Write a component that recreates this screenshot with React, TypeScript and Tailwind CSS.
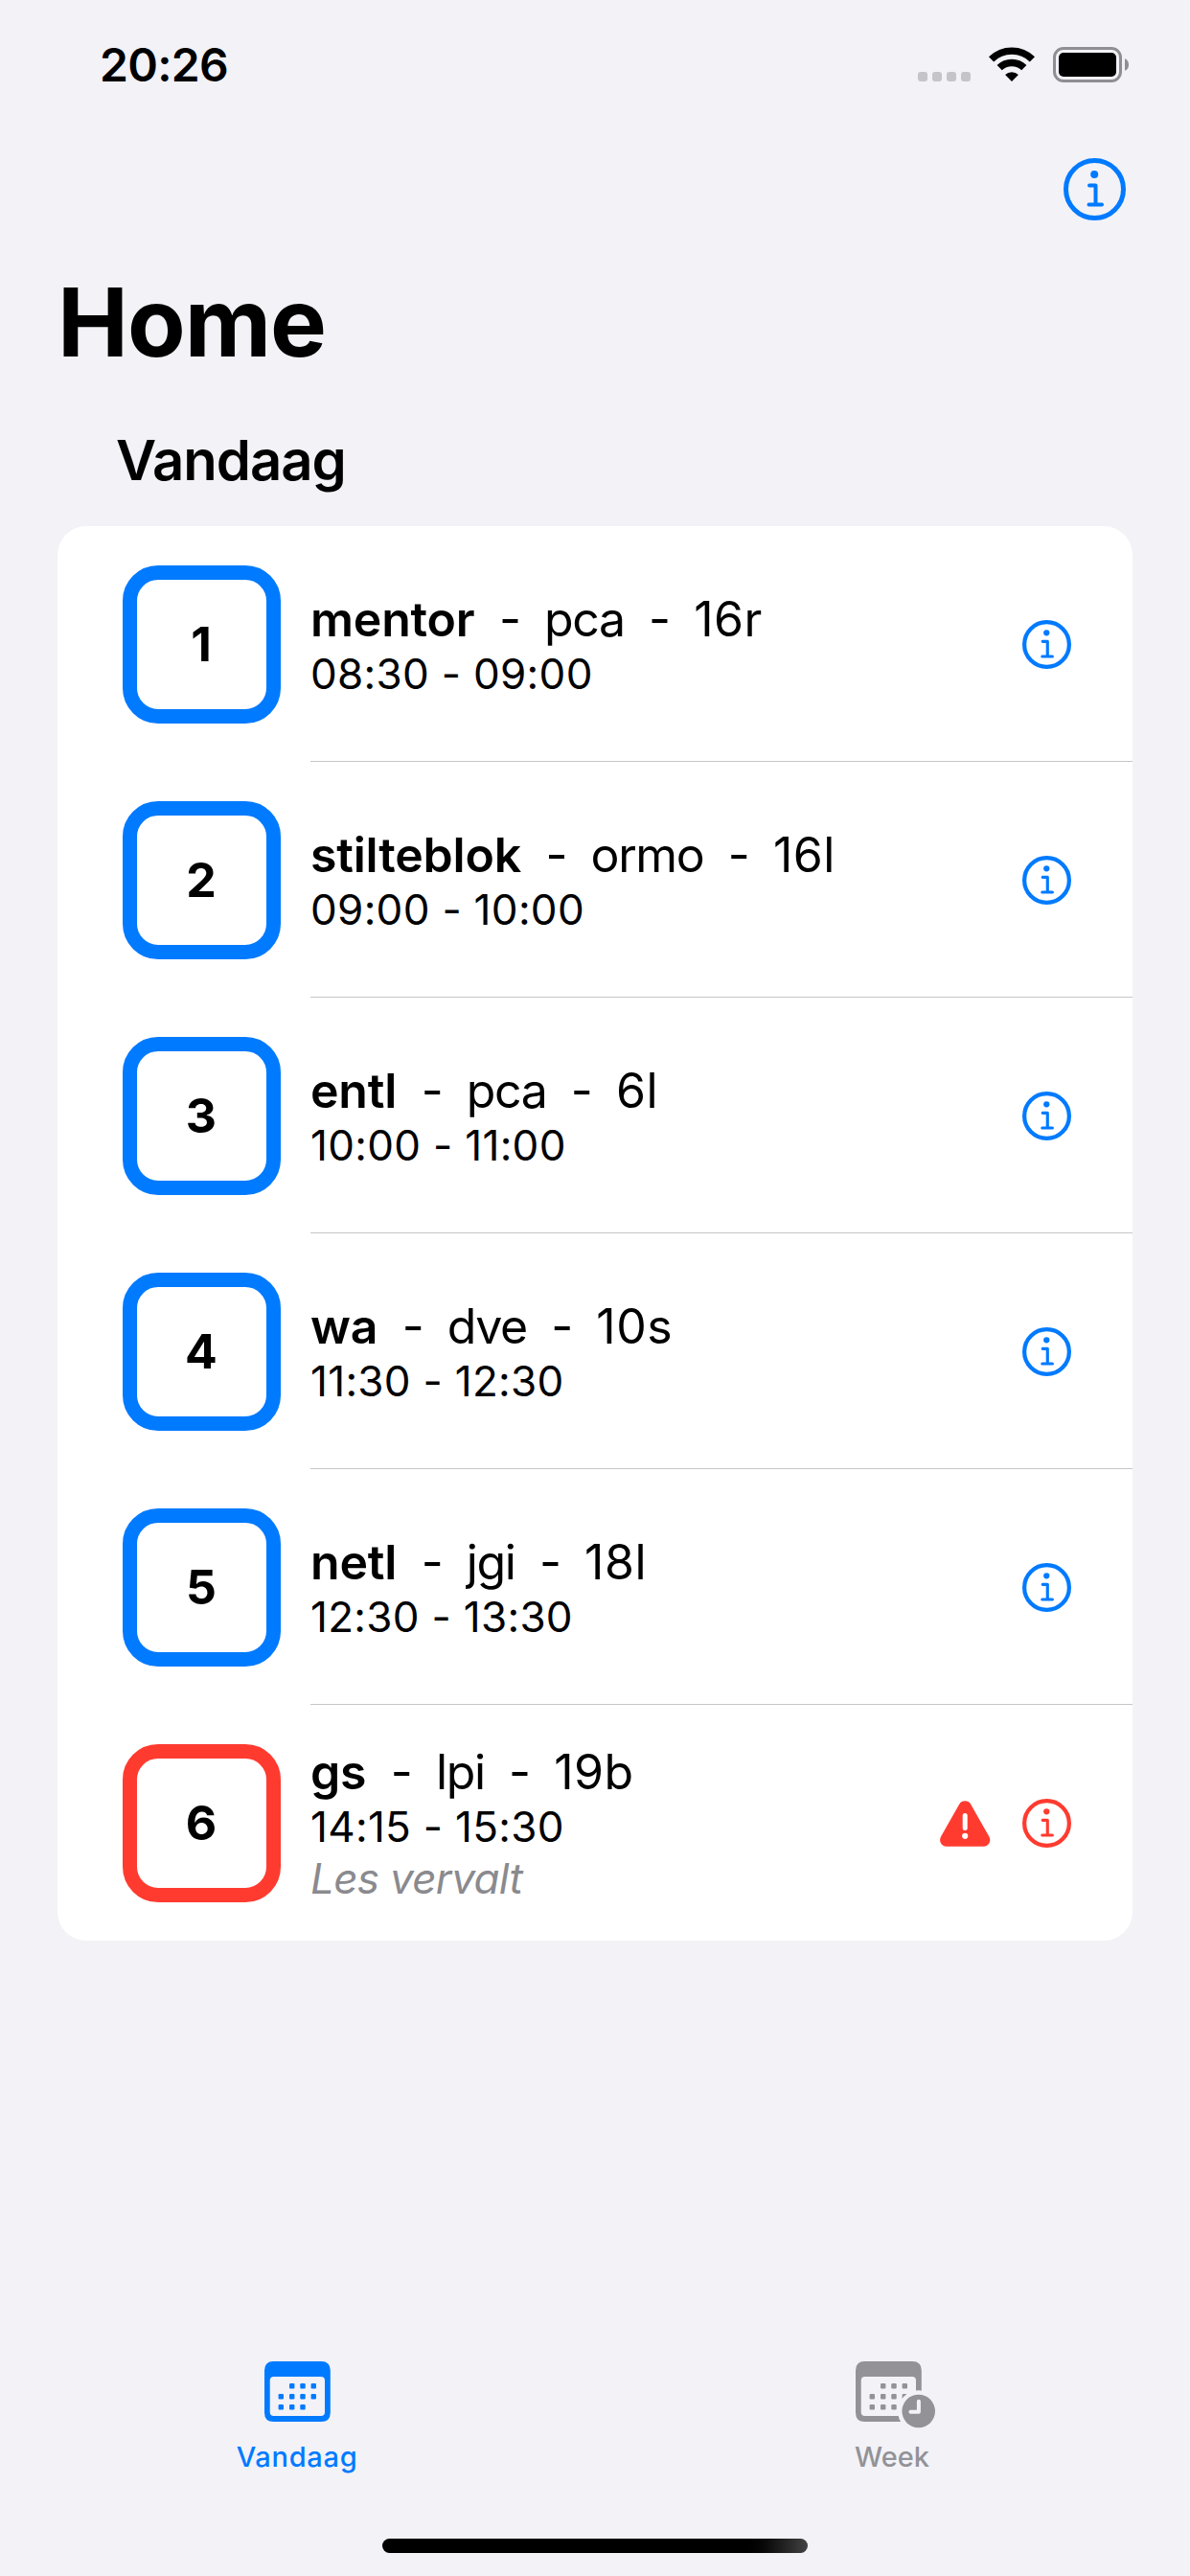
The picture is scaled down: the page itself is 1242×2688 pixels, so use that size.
type Lesson = {
  hour: number;
  subject: string;
  teacher: string;
  room: string;
  time: string;
  note?: string;
};

const lessons: Lesson[] = [
  { hour: 1, subject: "mentor", teacher: "pca", room: "16r", time: "08:30 - 09:00" },
  { hour: 2, subject: "stilteblok", teacher: "ormo", room: "16l", time: "09:00 - 10:00" },
  { hour: 3, subject: "entl", teacher: "pca", room: "6l", time: "10:00 - 11:00" },
  { hour: 4, subject: "wa", teacher: "dve", room: "10s", time: "11:30 - 12:30" },
  { hour: 5, subject: "netl", teacher: "jgi", room: "18l", time: "12:30 - 13:30" },
  { hour: 6, subject: "gs", teacher: "lpi", room: "19b", time: "14:15 - 15:30", note: "Les vervalt" },
];

function InfoIcon({ className, ring = 5 }: { className: string; ring?: number }) {
  return (
    <svg viewBox="0 0 65 65" className={className} fill="none" stroke="currentColor">
      <circle cx="32.5" cy="32.5" r={32.5 - ring / 2} strokeWidth={ring} />
      <circle cx="32.2" cy="17" r="4" fill="currentColor" stroke="none" />
      <path d="M27 28.5H33.5V48.5M26.5 48.5H40" strokeWidth="4" strokeLinecap="round" strokeLinejoin="round" />
    </svg>
  );
}

function WarningIcon() {
  return (
    <svg viewBox="0 0 53 48" className="h-12 w-[53px]">
      <path
        d="M20.3 3.6Q22.3 0.3 26.2 0.3T32.1 3.6L51.4 37.4Q53.2 41 51.4 44.3Q49.6 47.7 45.6 47.7H6.8Q2.8 47.7 1 44.3T1 37.4Z"
        fill="currentColor"
      />
      <path d="M26.2 15.6V28.4" stroke="white" strokeWidth="5" strokeLinecap="round" />
      <circle cx="26.2" cy="36.8" r="3.1" fill="white" />
    </svg>
  );
}

function WifiIcon() {
  return (
    <svg viewBox="0 0 48 36" className="h-9 w-12">
      <g fill="none" stroke="black" strokeWidth="7.4">
        <path d="M2.6 12.9A30.5 30.5 0 0 1 45.4 12.9" />
        <path d="M11.2 21.7A18.3 18.3 0 0 1 36.8 21.7" />
      </g>
      <path d="M17.1 29A9.8 9.8 0 0 1 30.9 29L24 36Z" fill="black" />
    </svg>
  );
}

function BatteryIcon() {
  return (
    <svg viewBox="0 0 80 37" className="h-[37px] w-20">
      <rect x="1.5" y="1.5" width="69" height="34" rx="9.5" fill="none" stroke="#8f8f93" strokeWidth="3" />
      <rect x="6" y="6" width="60" height="25" rx="5" fill="black" />
      <path d="M75 12Q79 14 79 18.5T75 25Z" fill="#8f8f93" />
    </svg>
  );
}

const dots = [
  [28.7, 25.7], [40, 25.7], [51.3, 25.7],
  [17.3, 36.7], [28.7, 36.7], [40, 36.7], [51.3, 36.7],
  [17.3, 47.7], [28.7, 47.7], [40, 47.7],
];

function CalendarIcon({ clock = false }: { clock?: boolean }) {
  return (
    <svg viewBox={clock ? "0 0 84 70" : "0 0 69 70"} className={clock ? "ml-[7px] h-[70px] w-[84px]" : "h-[70px] w-[69px]"}>
      <path
        fillRule="evenodd"
        fill="currentColor"
        d="M9.5 0H59.2Q68.8 0 68.8 9.5V53.5Q68.8 63 59.2 63H9.5Q0 63 0 53.5V9.5Q0 0 9.5 0ZM9.7 16Q5.7 16 5.7 20V53Q5.7 57 9.7 57H59Q63 57 63 53V20Q63 16 59 16Z"
      />
      {dots.map(([x, y]) => (
        <rect key={`${x}-${y}`} x={x - 2.7} y={y - 2.7} width="5.4" height="5.4" rx="1.2" fill="currentColor" />
      ))}
      {clock && (
        <>
          <circle cx="65.7" cy="52" r="21.7" fill="#f2f2f7" />
          <circle cx="65.7" cy="52" r="17.3" fill="currentColor" />
          <path d="M65.9 41.8V52.7H57.4" fill="none" stroke="#f2f2f7" strokeWidth="4" strokeLinecap="round" strokeLinejoin="round" />
        </>
      )}
    </svg>
  );
}

function LessonRow({ lesson, last }: { lesson: Lesson; last: boolean }) {
  const cancelled = Boolean(lesson.note);
  return (
    <li className="flex h-[246px] pl-[67.5px]">
      <div
        className={`mt-[40.5px] mr-[31.5px] flex size-[165px] shrink-0 items-center justify-center rounded-[37px] border-[15px] pt-px text-[50px] font-bold ${
          cancelled ? "border-[#ff3b30]" : "border-[#007aff]"
        }`}
      >
        {lesson.hour}
      </div>
      <div className={`flex grow items-center border-b pr-16 ${last ? "border-transparent" : "border-[#c6c6c8]"}`}>
        <div className="grow pt-[3px] whitespace-nowrap">
          <div className="flex gap-[25.5px] text-[50px] leading-[60px] tracking-[-1.4px]">
            <span className="font-semibold tracking-[-0.2px]">{lesson.subject}</span>
            <span>-</span>
            <span>{lesson.teacher}</span>
            <span>-</span>
            <span className="tracking-[0.5px]">{lesson.room}</span>
          </div>
          <div className="text-[44px] leading-[54px] tracking-[0.3px]">{lesson.time}</div>
          {lesson.note && (
            <div className="text-[44px] leading-[54px] tracking-[-0.7px] text-[#8a8a8e] italic">{lesson.note}</div>
          )}
        </div>
        <div className={`mt-[2px] flex items-center gap-[33px] ${cancelled ? "text-[#ff3b30]" : "text-[#007aff]"}`}>
          {cancelled && <WarningIcon />}
          <InfoIcon className="size-[51px]" ring={5.4} />
        </div>
      </div>
    </li>
  );
}

export default function App() {
  return (
    <div className="flex h-[2688px] w-[1242px] flex-col overflow-hidden bg-[#f2f2f7] font-['Inter',sans-serif] text-black">
      <header className="flex h-[132px] items-start justify-between pt-[49px] pr-[63px] pl-[104px]">
        <span className="-mt-[11px] text-[48px] leading-[60px] font-semibold tracking-[-0.7px]">20:26</span>
        <div className="flex items-start">
          <div className="mt-[26px] mr-[19px] flex gap-[5px]">
            {[0, 1, 2, 3].map((i) => (
              <span key={i} className="size-[10px] rounded-[3px] bg-[#c4c4c9]" />
            ))}
          </div>
          <WifiIcon />
          <div className="ml-[19px]">
            <BatteryIcon />
          </div>
        </div>
      </header>

      <nav className="flex h-[131px] items-center justify-end pr-[67px] text-[#007aff]">
        <InfoIcon className="size-[65px]" />
      </nav>

      <h1 className="mt-[13px] pl-[60px] text-[99px] leading-[120px] font-bold tracking-[-1px]">Home</h1>
      <h2 className="mt-[44px] pl-[121px] text-[58px] leading-[80px] font-semibold tracking-[-1px]">Vandaag</h2>

      <ul className="mx-[60px] mt-[29px] overflow-hidden rounded-[30px] bg-white">
        {lessons.map((lesson, i) => (
          <LessonRow key={lesson.hour} lesson={lesson} last={i === lessons.length - 1} />
        ))}
      </ul>

      <footer className="mt-auto">
        <div className="grid h-[185px] grid-cols-2 text-[29px] leading-[36px] font-medium">
          <div className="flex flex-col items-center text-[#007aff]">
            <CalendarIcon />
            <span className="mt-[12px] -ml-px tracking-[0.7px]">Vandaag</span>
          </div>
          <div className="flex flex-col items-center text-[#929297]">
            <CalendarIcon clock />
            <span className="mt-[12px] -ml-px">Week</span>
          </div>
        </div>
        <div className="mx-auto mb-6 h-[15px] w-[444px] rounded-full bg-linear-to-r from-black from-84% to-[#444]" />
      </footer>
    </div>
  );
}
